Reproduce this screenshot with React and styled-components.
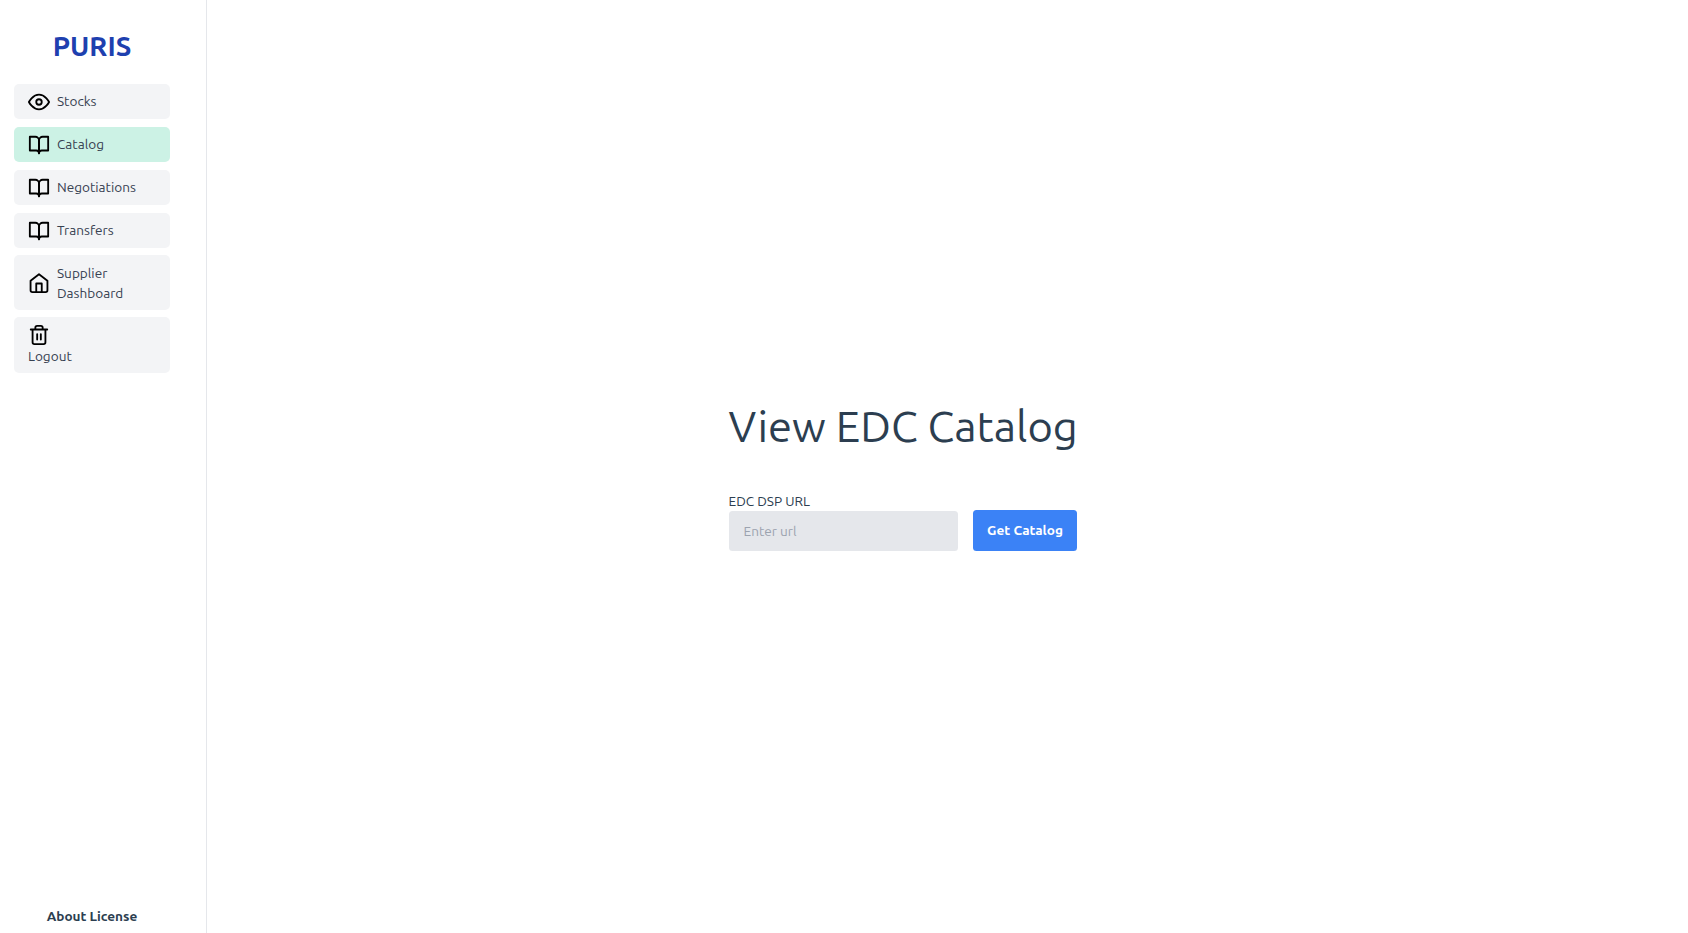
import React from "react";
import styled, { createGlobalStyle } from "styled-components";

const GlobalStyle = createGlobalStyle`
  *, *::before, *::after { box-sizing: border-box; }
  body {
    margin: 0;
    background: #fff;
    color: #2c3e50;
    font-family: Ubuntu, "Noto Sans", sans-serif;
    font-size: 13.6px;
  }
`;

const Page = styled.div`
  display: flex;
  height: 100vh;
`;

const Sidebar = styled.aside`
  display: flex;
  flex-direction: column;
  width: 207px;
  padding: 28px 36px 7px 14px;
  border-right: 1px solid #e5e7eb;
`;

const Brand = styled.div`
  height: 36px;
  margin-bottom: 20px;
  line-height: 36px;
  text-align: center;
  color: #1e40af;
  font-size: 27.5px;
  font-weight: 700;
`;

const Nav = styled.nav`
  display: flex;
  flex-direction: column;
  gap: 8px;
  flex: 1;
`;

const NavItem = styled.a`
  display: flex;
  flex-direction: ${(p) => (p.$stacked ? "column" : "row")};
  align-items: ${(p) => (p.$stacked ? "flex-start" : "center")};
  gap: ${(p) => (p.$stacked ? "0" : "7px")};
  height: ${(p) => p.$height || 35}px;
  margin-top: ${(p) => (p.$height ? "-1px" : "0")};
  padding: 7px 14px;
  border-radius: 5px;
  background: ${(p) => (p.$active ? "#ccf2e5" : "#f3f4f6")};
  color: #374151;
  line-height: 20px;
  text-decoration: none;
`;

const NavText = styled.span`
  margin-bottom: ${(p) => (p.$tall ? 0 : 1)}px;
`;

const Icon = styled.svg`
  flex: none;
  width: 22px;
  height: 22px;
  fill: none;
  stroke: #000;
  stroke-width: 2;
  stroke-linecap: round;
  stroke-linejoin: round;
`;

const Footer = styled.footer`
  line-height: 20px;
  text-align: center;
  font-weight: 700;
`;

const Main = styled.main`
  display: flex;
  flex: 1;
  flex-direction: column;
  align-items: center;
  padding: 397px 90px 0 0;
`;

const Content = styled.section`
  width: 348px;
`;

const Title = styled.h1`
  margin: 0 0 36px;
  font-size: 43.5px;
  font-weight: 400;
  line-height: 58px;
  white-space: nowrap;
`;

const Form = styled.form`
  display: flex;
  align-items: flex-end;
  gap: 15px;
`;

const Field = styled.div`
  display: flex;
  flex-direction: column;
  width: 229px;
`;

const Label = styled.label`
  line-height: 20px;
`;

const Input = styled.input`
  height: 40px;
  padding: 0 15px;
  border: 0;
  border-radius: 3.5px;
  background: #e5e7eb;
  font: inherit;
  &::placeholder { color: #9ca3af; opacity: 1; }
`;

const Button = styled.button`
  width: 104px;
  height: 41px;
  padding: 0 0 2px 1px;
  border: 0;
  border-radius: 3.5px;
  background: #3b82f6;
  color: #fff;
  font: inherit;
  font-weight: 700;
  white-space: nowrap;
`;

const icons = {
  eye: (
    <>
      <path d="M1 12s4-8 11-8 11 8 11 8-4 8-11 8-11-8-11-8z" />
      <circle cx="12" cy="12" r="3" />
    </>
  ),
  book: (
    <>
      <path d="M2 3h6a4 4 0 0 1 4 4v14a3 3 0 0 0-3-3H2z" />
      <path d="M22 3h-6a4 4 0 0 0-4 4v14a3 3 0 0 1 3-3h7z" />
    </>
  ),
  home: (
    <>
      <path d="M2.8 9.5l9.2-7 9.2 7V20a2 2 0 0 1-2 2H4.8a2 2 0 0 1-2-2z" />
      <path d="M9 22V12.5h6V22" />
    </>
  ),
  trash: (
    <>
      <path d="M3 6h18M19 6v14a2 2 0 0 1-2 2H7a2 2 0 0 1-2-2V6m3 0V4a2 2 0 0 1 2-2h4a2 2 0 0 1 2 2v2" />
      <path d="M10 11v6M14 11v6" />
    </>
  ),
};

const items = [
  { icon: "eye", label: "Stocks" },
  { icon: "book", label: "Catalog", active: true },
  { icon: "book", label: "Negotiations" },
  { icon: "book", label: "Transfers" },
  { icon: "home", label: "Supplier Dashboard", height: 55 },
  { icon: "trash", label: "Logout", height: 56, stacked: true },
];

export default function App() {
  return (
    <Page>
      <GlobalStyle />
      <Sidebar>
        <Brand>PURIS</Brand>
        <Nav>
          {items.map((it) => (
            <NavItem key={it.label} $active={it.active} $height={it.height} $stacked={it.stacked}>
              <Icon viewBox="0 0 24 24">{icons[it.icon]}</Icon>
              <NavText $tall={Boolean(it.height)}>{it.label}</NavText>
            </NavItem>
          ))}
        </Nav>
        <Footer>About License</Footer>
      </Sidebar>
      <Main>
        <Content>
          <Title>View EDC Catalog</Title>
          <Form>
            <Field>
              <Label htmlFor="url">EDC DSP URL</Label>
              <Input id="url" placeholder="Enter url" />
            </Field>
            <Button type="button">Get Catalog</Button>
          </Form>
        </Content>
      </Main>
    </Page>
  );
}
